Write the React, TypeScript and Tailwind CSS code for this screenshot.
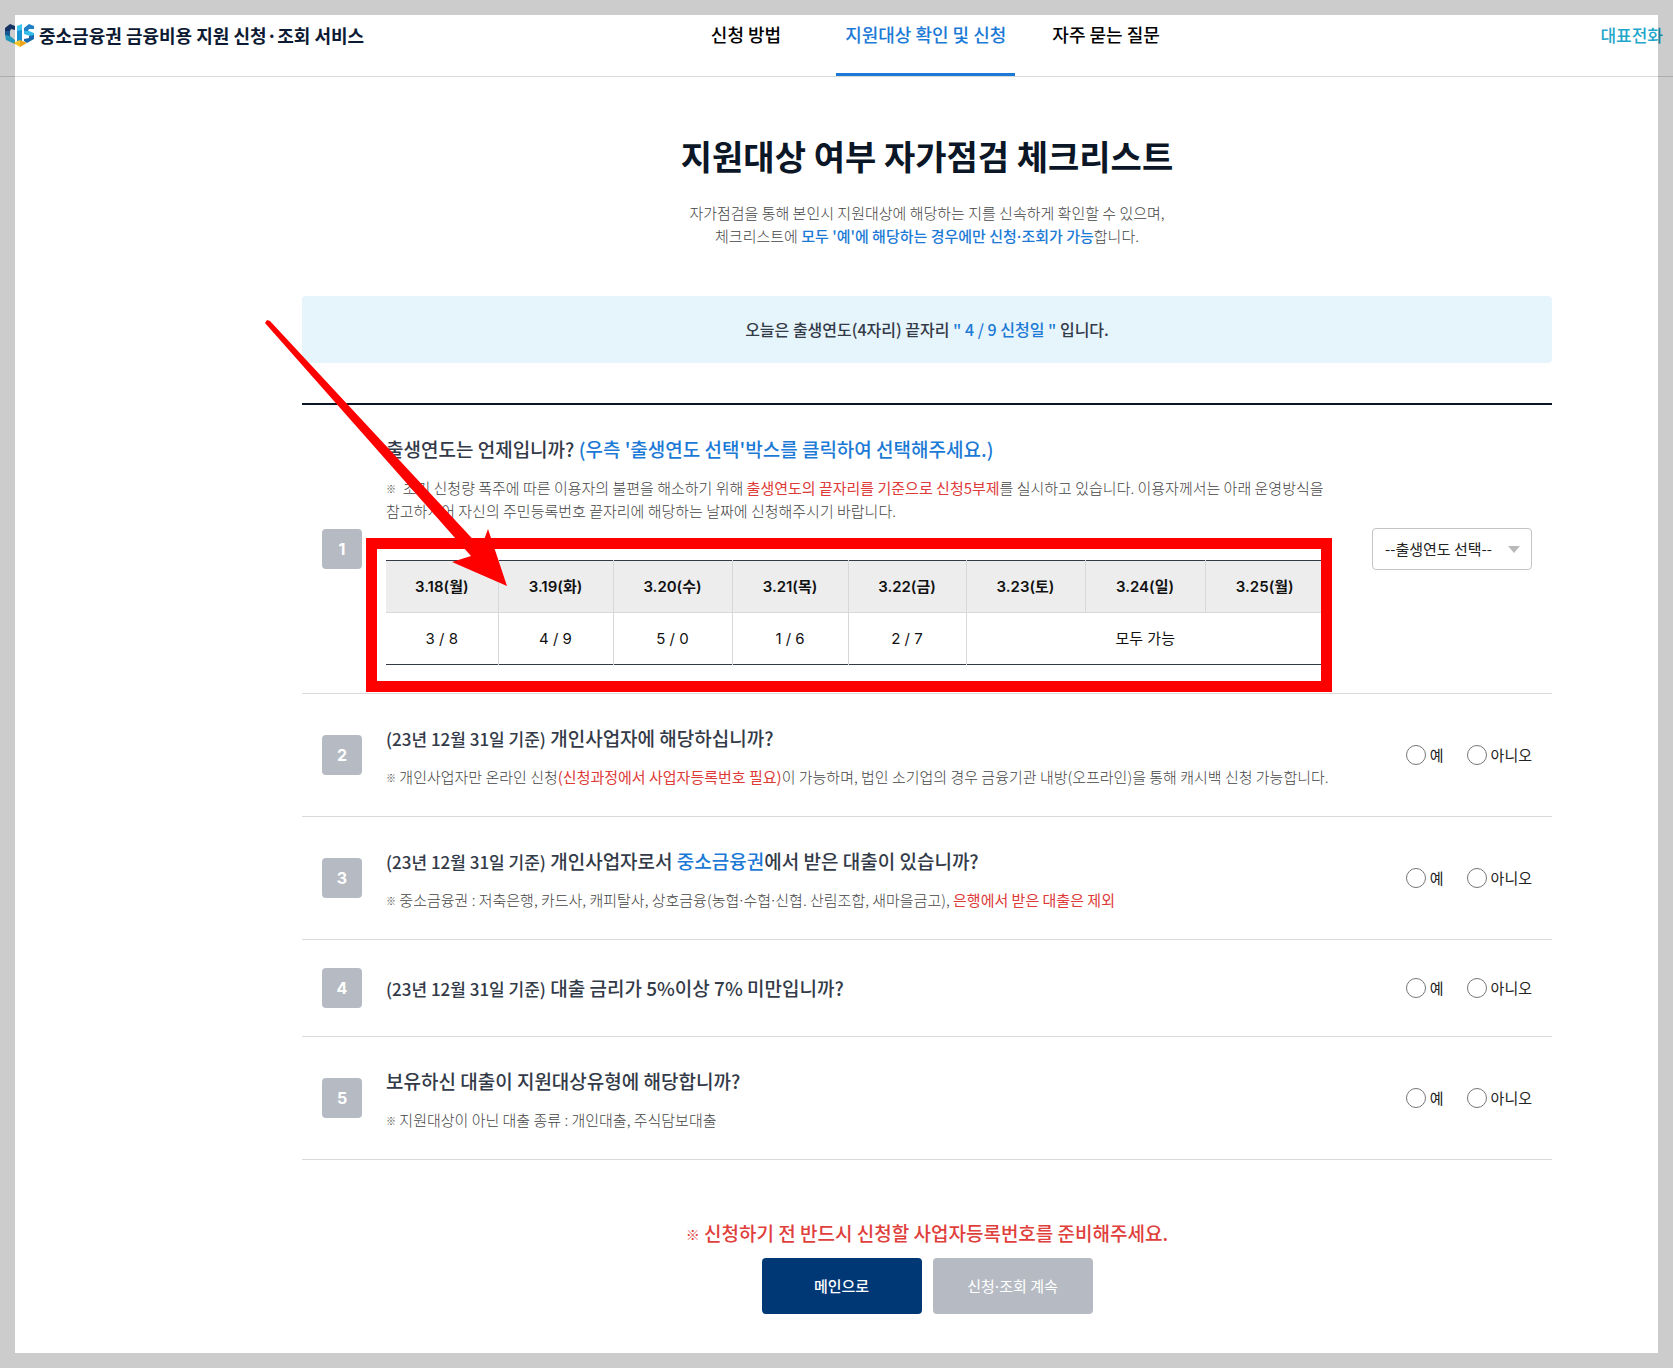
import React from 'react';

const navItems = [
  { label: '신청 방법', active: false, spacing: 'mr-[46px]' },
  { label: '지원대상 확인 및 신청', active: true, spacing: 'mr-7' },
  { label: '자주 묻는 질문', active: false, spacing: '' },
];

const schedule = [
  { date: '3.18(월)', digits: '3 / 8', width: 'w-[112px]' },
  { date: '3.19(화)', digits: '4 / 9', width: 'w-[115px]' },
  { date: '3.20(수)', digits: '5 / 0', width: 'w-[119px]' },
  { date: '3.21(목)', digits: '1 / 6', width: 'w-[116px]' },
  { date: '3.22(금)', digits: '2 / 7', width: 'w-[118px]' },
  { date: '3.23(토)', width: 'w-[119px]' },
  { date: '3.24(일)', width: 'w-[120px]' },
  { date: '3.25(월)', width: 'w-[119px]' },
];

const Logo: React.FC = () => (
  <svg viewBox="0 0 30 24" className="h-6 w-[30px] shrink-0" aria-hidden="true">
    <path d="M0 5 L5 1 L10 3 V7 L6 6 L5 8 L0 11 Z" fill="#1b3f7d" />
    <path d="M0 8 L5 8 V14 L0 12 Z" fill="#1d6fb5" />
    <path d="M0 12 L5 13 L10 17 V21 L1 17 Z" fill="#2cbbe8" />
    <path d="M12 3 L17 1 V8 L12 10 Z" fill="#3cc4ee" />
    <path d="M12 8 L17 7 V18 L12 18 Z" fill="#1b93d2" />
    <path d="M19 5 L24 1 L29 3 V6 L24 6 L23 8 L19 9 Z" fill="#1f7fc4" />
    <path d="M19 8 L24 8 L29 10 V14 L25 13 L19 11 Z" fill="#35bdea" />
    <path d="M24 13 L29 12 V16 L22 20 L19 18 V16 L24 15 Z" fill="#1668ad" />
    <path d="M8 20 L15 17 L15 24 Z" fill="#f6c52a" />
    <path d="M15 17 L22 20 L15 24 Z" fill="#eba51c" />
  </svg>
);

const Arrow: React.FC = () => (
  <svg
    viewBox="0 0 244 267"
    className="pointer-events-none absolute -left-[121px] -top-[240px] h-[267px] w-[244px]"
    aria-hidden="true"
  >
    <path d="M0 3 L2 0 L5 1 L216 228 L223 209 L242 266 L187 242 L206 236 Z" fill="#ff0000" />
  </svg>
);

const ScheduleTable: React.FC = () => (
  <div className="relative mt-[38px] max-w-[938px]">
    <table className="w-full table-fixed border-collapse border-y border-[#333a44] text-center font-['Inter','Noto_Sans_CJK_KR',sans-serif] text-[15px] leading-6 text-[#111]">
      <thead>
        <tr className="h-[52px] bg-[#ededee]">
          {schedule.map((day) => (
            <th
              key={day.date}
              scope="col"
              className={`${day.width} border-b border-r border-[#d8d8d8] font-semibold last:border-r-0`}
            >
              {day.date}
            </th>
          ))}
        </tr>
      </thead>
      <tbody>
        <tr className="h-[52px]">
          {schedule
            .filter((day) => day.digits)
            .map((day) => (
              <td key={day.date} className="border-r border-[#d8d8d8]">
                {day.digits}
              </td>
            ))}
          <td colSpan={3}>모두 가능</td>
        </tr>
      </tbody>
    </table>
    <div className="pointer-events-none absolute -bottom-[27px] -left-5 -right-2 -top-[22px] border-[11px] border-[#ff0000]" />
    <Arrow />
  </div>
);

interface QuestionProps {
  no: number;
  title: React.ReactNode;
  note?: React.ReactNode;
  answer?: React.ReactNode;
  children?: React.ReactNode;
}

const YesNo: React.FC<{ no: number }> = ({ no }) => (
  <div className="flex gap-[23px]">
    {['예', '아니오'].map((label) => (
      <label key={label} className="flex items-center gap-1 text-[15px] leading-6 text-[#222]">
        <input
          type="radio"
          name={`q${no}`}
          className="size-5 appearance-none rounded-full border border-[#767676] bg-white checked:border-[6px] checked:border-[#1c7ad6]"
        />
        {label}
      </label>
    ))}
  </div>
);

const Question: React.FC<QuestionProps> = ({ no, title, note, answer, children }) => (
  <li className="flex items-center border-b border-[#d9d9d9] px-5 py-7">
    <span className="flex size-10 shrink-0 items-center justify-center rounded bg-[#b6bbc3] font-['Inter',sans-serif] text-base font-bold text-white">
      {no}
    </span>
    <div className="ml-6 flex-1">
      <h2 className="text-[19px] font-medium leading-8 text-[#333a48]">{title}</h2>
      {note && (
        <p className="mt-[11px] text-[15px] font-light leading-[23px] text-[#444]">
          <Mark /> {note}
        </p>
      )}
      {children}
    </div>
    <div className="shrink-0">{answer || <YesNo no={no} />}</div>
  </li>
);

const Mark: React.FC = () => <span className="align-[1px] text-[10px] leading-none font-medium">※</span>;
const Dot: React.FC = () => <span className="font-['Inter',sans-serif] leading-none">·</span>;
const Base: React.FC = () => <span className="text-[17px] leading-none">(23년 12월 31일 기준)</span>;
const Blue: React.FC<{ children: React.ReactNode }> = ({ children }) => (
  <span className="text-[#1c7ad6]">{children}</span>
);
const Red: React.FC<{ children: React.ReactNode }> = ({ children }) => (
  <span className="font-normal text-[#dd3a38]">{children}</span>
);

const YearSelect: React.FC = () => (
  <div className="relative">
    <select
      aria-label="출생연도 선택"
      className="h-[42px] w-40 appearance-none rounded border border-[#c4c4c4] bg-white pl-3 pr-8 text-[15px] text-[#222]"
    >
      <option>--출생연도 선택--</option>
    </select>
    <svg viewBox="0 0 12 7" className="pointer-events-none absolute right-3 top-[18px] h-[7px] w-3" aria-hidden="true">
      <path d="M0 0 H12 L6 7 Z" fill="#b9b9b9" />
    </svg>
  </div>
);

export default function App() {
  return (
    <div className="relative min-h-screen bg-white font-['Noto_Sans_CJK_KR',sans-serif] text-[#222]">
      <header className="flex h-[77px] items-start border-b border-[#d9d9d9] pl-[5px] pr-2.5">
        <a href="#" className="flex h-[70px] w-5/12 items-center gap-1 text-lg font-bold text-[#0d1a33]">
          <Logo />
          중소금융권 금융비용 지원 신청·조회 서비스
        </a>
        <nav className="flex pl-1.5">
          {navItems.map((item) => (
            <a
              key={item.label}
              href="#"
              className={`flex h-[76px] items-start border-b-[3px] px-[9px] pt-[18px] text-lg font-medium leading-8 ${item.spacing} ${
                item.active ? 'border-[#1c7ad6] text-[#1c7ad6]' : 'border-transparent text-black'
              }`}
            >
              {item.label}
            </a>
          ))}
        </nav>
        <a href="#" className="ml-auto flex h-[70px] items-center text-[17px] font-medium text-[#1fa6cb]">
          대표전화
        </a>
      </header>

      <main className="pb-[53px] pl-[302px] pr-[121px]">
        <h1 className="pt-[55px] text-center text-[34px] font-bold leading-12 text-[#0b1626]">
          지원대상 여부 자가점검 체크리스트
        </h1>
        <p className="mt-[21px] text-center text-[15px] font-light leading-[23px] text-[#444]">
          자가점검을 통해 본인시 지원대상에 해당하는 지를 신속하게 확인할 수 있으며,
          <br />
          체크리스트에{' '}
          <strong className="font-medium text-[#1c7ad6]">
            모두 '예'에 해당하는 경우에만 신청
            <Dot />
            조회가 가능
          </strong>
          합니다.
        </p>

        <div className="mt-[49px] rounded-sm bg-[#e6f4fb] py-[21px] text-center text-base font-medium leading-[25px] text-[#333a48]">
          오늘은 출생연도(4자리) 끝자리 <Blue>" 4 / 9 신청일 "</Blue> 입니다.
        </div>

        <ol className="mt-10 border-t-2 border-[#0b1626]">
          <Question
            no={1}
            title={
              <>
                출생연도는 언제입니까? <Blue>(우측 '출생연도 선택'박스를 클릭하여 선택해주세요.)</Blue>
              </>
            }
            note={
              <>
                &nbsp;초기 신청량 폭주에 따른 이용자의 불편을 해소하기 위해{' '}
                <Red>출생연도의 끝자리를 기준으로 신청5부제</Red>를 실시하고 있습니다. 이용자께서는 아래 운영방식을
                <br />
                참고하시어 자신의 주민등록번호 끝자리에 해당하는 날짜에 신청해주시기 바랍니다.
              </>
            }
            answer={<YearSelect />}
          >
            <ScheduleTable />
          </Question>
          <Question
            no={2}
            title={
              <>
                <Base /> 개인사업자에 해당하십니까?
              </>
            }
            note={
              <>
                개인사업자만 온라인 신청<Red>(신청과정에서 사업자등록번호 필요)</Red>이 가능하며, 법인 소기업의 경우
                금융기관 내방(오프라인)을 통해 캐시백 신청 가능합니다.
              </>
            }
          />
          <Question
            no={3}
            title={
              <>
                <Base /> 개인사업자로서 <Blue>중소금융권</Blue>에서 받은 대출이 있습니까?
              </>
            }
            note={
              <>
                중소금융권 : 저축은행, 카드사, 캐피탈사, 상호금융(농협
                <Dot />
                수협
                <Dot />
                신협. 산림조합, 새마을금고), <Red>은행에서 받은 대출은 제외</Red>
              </>
            }
          />
          <Question
            no={4}
            title={
              <>
                <Base /> 대출 금리가 5%이상 7% 미만입니까?
              </>
            }
          />
          <Question
            no={5}
            title="보유하신 대출이 지원대상유형에 해당합니까?"
            note="지원대상이 아닌 대출 종류 : 개인대출, 주식담보대출"
          />
        </ol>

        <p className="mt-[57px] text-center text-[19px] font-medium leading-8 text-[#e0403c]">
          <span className="align-[1px] text-sm leading-none">※</span> 신청하기 전 반드시 신청할 사업자등록번호를 준비해주세요.
        </p>
        <div className="mt-[9px] flex justify-center gap-[11px] text-[15px]">
          <button type="button" className="h-14 w-40 rounded bg-[#003876] font-medium text-white">
            메인으로
          </button>
          <button type="button" className="h-14 w-40 rounded bg-[#b6bbc3] text-white">
            신청
            <Dot />
            조회 계속
          </button>
        </div>
      </main>

      {/* translucent frame over the page edges */}
      <div className="pointer-events-none absolute inset-0 border-[15px] border-black/20" />
    </div>
  );
}
